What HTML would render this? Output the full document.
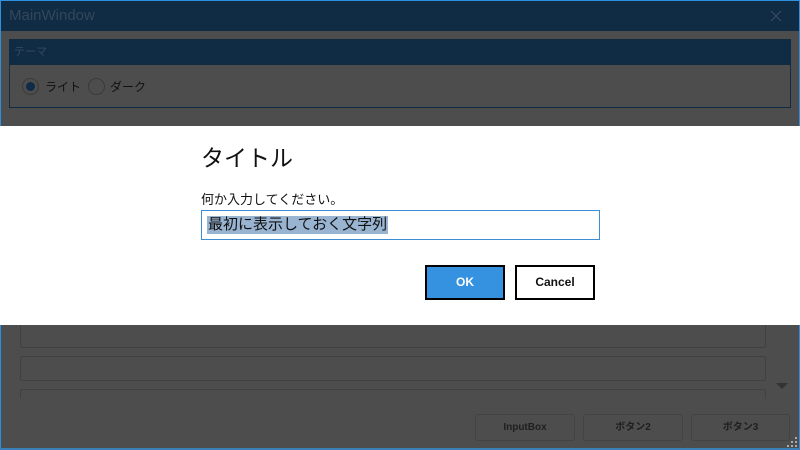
<!DOCTYPE html>
<html><head><meta charset="utf-8"><style>
*{margin:0;padding:0;box-sizing:border-box}
body{width:800px;height:450px;overflow:hidden;background:#4d4d4d;position:relative;font-family:"Liberation Sans","Noto Sans CJK JP",sans-serif}
.abs{position:absolute}
.frame{left:0;top:0;width:800px;height:450px;border:1px solid #2f8fe0;border-bottom:2px solid #3a7fb8}
.title{left:1px;top:1px;width:798px;height:30px;background:#102b44;color:#34475a;font-size:15px;line-height:30px;padding-left:8px}
.grp{left:9px;top:39px;width:782px;height:69px;border:1px solid #102b44}
.grph{left:9px;top:39px;width:782px;height:26px;background:#102b44;color:#34495e;font-size:11px;line-height:26px;padding-left:5px}
.radio{width:17px;height:17px;border-radius:50%;border:1px solid #3a3a3a;}
.lbl{font-size:12px;color:#111}
.tb{left:20px;width:746px;height:25px;border:1px solid #414141;border-radius:2px}
.btn{top:414px;height:27px;border:1px solid #434343;border-radius:3px;font-size:10px;font-weight:bold;color:#1f1f1f;text-align:center;line-height:25px}
.dlg{left:0;top:126px;width:800px;height:199px;background:#fff}
</style></head><body>
<div class="abs frame"></div>
<div class="abs title">MainWindow</div>
<svg class="abs" style="left:770px;top:10px" width="12" height="12"><path d="M1 1L11 11M11 1L1 11" stroke="#3d4f61" stroke-width="1"/></svg>
<div class="abs grp"></div>
<div class="abs grph">テーマ</div>
<div class="abs radio" style="left:22px;top:78px"></div>
<div class="abs" style="left:26px;top:82px;width:9px;height:9px;border-radius:50%;background:#0f2b45"></div>
<div class="abs lbl" style="left:45px;top:78px">ライト</div>
<div class="abs radio" style="left:88px;top:78px"></div>
<div class="abs lbl" style="left:110px;top:78px">ダーク</div>
<div class="abs tb" style="top:323px"></div>
<div class="abs tb" style="top:356px"></div>
<div class="abs tb" style="top:389px;height:10px;border-bottom:none"></div>
<svg class="abs" style="left:776px;top:383px" width="14" height="8"><path d="M0 0H12L6 6Z" fill="#333"/></svg>
<div class="abs btn" style="left:475px;width:100px">InputBox</div>
<div class="abs btn" style="left:583px;width:100px">ボタン2</div>
<div class="abs btn" style="left:691px;width:99px">ボタン3</div>
<svg class="abs" style="left:787px;top:437px" width="12" height="12"><g fill="#aaa"><rect x="8" y="0" width="2" height="2"/><rect x="4" y="4" width="2" height="2"/><rect x="8" y="4" width="2" height="2"/><rect x="0" y="8" width="2" height="2"/><rect x="4" y="8" width="2" height="2"/><rect x="8" y="8" width="2" height="2"/></g></svg>
<div class="abs dlg"></div>
<div class="abs" style="left:201px;top:139px;font-size:23px;color:#111">タイトル</div>
<div class="abs" style="left:201px;top:189px;font-size:13px;color:#111">何か入力してください。</div>
<div class="abs" style="left:201px;top:210px;width:399px;height:30px;border:1px solid #3c8dd6"></div>
<div class="abs" style="left:207px;top:216px;height:18px;background:#99b4d1;font-size:15px;line-height:18px;color:#111;padding:0 1px">最初に表示しておく文字列</div>
<div class="abs" style="left:425px;top:265px;width:80px;height:35px;background:#3592e0;border:2px solid #000;color:#fff;font-weight:bold;font-size:12px;text-align:center;line-height:31px">OK</div>
<div class="abs" style="left:515px;top:265px;width:80px;height:35px;background:#fff;border:2px solid #000;color:#111;font-weight:bold;font-size:12px;text-align:center;line-height:31px">Cancel</div>
</body></html>
